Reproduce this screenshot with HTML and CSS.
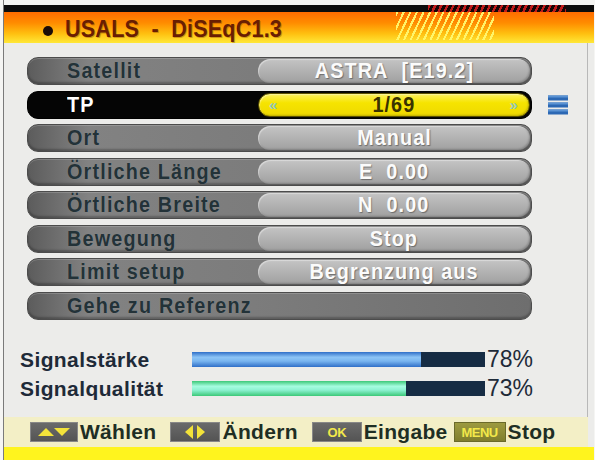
FILE: index.html
```html
<!DOCTYPE html>
<html lang="de">
<head>
<meta charset="utf-8">
<title>USALS - DiSEqC1.3</title>
<link rel="stylesheet" href="styles.css">
</head>
<body>
<div class="screen">
  <div class="topstrip"></div>
  <div class="blackband"><div class="redhatch"></div></div>
  <div class="titlebar">
    <div class="yellowhatch"></div>
    <span class="dot"></span><span class="title">USALS&nbsp; -&nbsp; DiSEqC1.3</span>
  </div>
  <div class="panel">
    <div class="rows">
      <div class="line"><div class="row"><span class="lbl"><span class="t">Satellit</span></span><span class="val"><span class="t">ASTRA&nbsp; [E19.2]</span></span></div></div>
      <div class="line"><div class="row sel"><span class="lbl"><span class="t">TP</span></span><span class="val"><span class="arr">&laquo;</span><span class="t">1/69</span><span class="arr">&raquo;</span></span></div>
        <svg class="menuicon" width="20" height="20" viewBox="0 0 20 20"><rect x="0" y="0.5" width="20" height="5" fill="#2c68b4"/><rect x="0" y="7.5" width="20" height="5" fill="#2c68b4"/><rect x="0" y="14.5" width="20" height="5" fill="#2c68b4"/><rect x="0" y="0.5" width="20" height="2" fill="#5b93d4"/><rect x="0" y="7.5" width="20" height="2" fill="#5b93d4"/><rect x="0" y="14.5" width="20" height="2" fill="#5b93d4"/></svg>
      </div>
      <div class="line"><div class="row"><span class="lbl"><span class="t">Ort</span></span><span class="val"><span class="t">Manual</span></span></div></div>
      <div class="line"><div class="row"><span class="lbl"><span class="t">Örtliche Länge</span></span><span class="val"><span class="t">E&nbsp; 0.00</span></span></div></div>
      <div class="line"><div class="row"><span class="lbl"><span class="t">Örtliche Breite</span></span><span class="val"><span class="t">N&nbsp; 0.00</span></span></div></div>
      <div class="line"><div class="row"><span class="lbl"><span class="t">Bewegung</span></span><span class="val"><span class="t">Stop</span></span></div></div>
      <div class="line"><div class="row"><span class="lbl"><span class="t">Limit setup</span></span><span class="val"><span class="t">Begrenzung aus</span></span></div></div>
      <div class="line"><div class="row"><span class="lbl wide"><span class="t">Gehe zu Referenz</span></span></div></div>
    </div>
    <div class="signals">
      <div class="sig"><span class="slbl">Signalstärke</span><div class="bar"><div class="fill blue" style="width:78%"></div></div><span class="pct">78%</span></div>
      <div class="sig"><span class="slbl">Signalqualität</span><div class="bar"><div class="fill green" style="width:73%"></div></div><span class="pct">73%</span></div>
    </div>
  </div>
  <div class="footer">
    <span class="key"><svg width="34" height="10" viewBox="0 0 34 10"><polygon points="1,9 9,1 17,9" fill="#f2e23a"/><polygon points="17,1 33,1 25,9" fill="#f2e23a"/></svg></span><span class="ftxt">Wählen</span>
    <span class="key k2"><svg width="26" height="14" viewBox="0 0 26 14"><polygon points="11,0 11,14 3,7" fill="#f2e23a"/><polygon points="15,0 15,14 23,7" fill="#f2e23a"/></svg></span><span class="ftxt">Ändern</span>
    <span class="key k3"><span class="ktxt">OK</span></span><span class="ftxt">Eingabe</span>
    <span class="key menu"><span class="ktxt">MENU</span></span><span class="ftxt">Stop</span>
  </div>
  <div class="bottomband"></div>
</div>
</body>
</html>
```
FILE: styles.css
```css
html, body { margin: 0; padding: 0; }
body {
  width: 595px; height: 460px; overflow: hidden;
  background: #f5f5f3;
  font-family: "Liberation Sans", Arial, sans-serif;
}
.screen {
  width: 591px; height: 460px; margin-left: 3px;
  display: flex; flex-direction: column;
  background: #ececea;
  border-left: 1px solid #7a7a7a;
  box-sizing: border-box;
}
.topstrip { height: 5px; background: #f4f4f2; }
.blackband { height: 7px; background: #0c0c0c; position: relative; }
.redhatch {
  position: absolute; left: 424px; top: 0; width: 138px; height: 7px;
  background: repeating-linear-gradient(115deg, #c01a1a 0 2.5px, #160606 2.5px 5.5px);
}
.titlebar {
  height: 31px; position: relative;
  background: linear-gradient(#ff6c00, #ff8c00 35%, #ffc010 70%, #ffe838);
  display: flex; align-items: center; padding-left: 39px;
}
.yellowhatch {
  position: absolute; left: 392px; top: 0; width: 98px; height: 28px;
  background: repeating-linear-gradient(115deg, rgba(255,248,110,0.95) 0 2px, rgba(255,255,255,0) 2px 6px);
}
.dot { width: 10px; height: 10px; border-radius: 50%; background: #1a0c08; margin-top: 7px; flex: none; }
.title {
  display: inline-block; transform: scaleX(0.9); transform-origin: left center;
  margin-left: 12px; margin-top: 3px;
  font-weight: bold; font-size: 24px; color: #6a1e02; letter-spacing: 0.2px;
  text-shadow: 1px 1px 0 rgba(120,60,0,0.35);
  white-space: nowrap;
}
.panel {
  flex: 1; display: flex; flex-direction: column;
  border-right: 1px solid #b8b8b8; margin-right: 6px;
  background: #ececea;
}
.rows { padding-top: 14px; padding-left: 23px; display: flex; flex-direction: column; gap: 5.5px; }
.line { display: flex; align-items: center; }
.row {
  width: 505px; height: 28px; box-sizing: border-box;
  border-radius: 11px; border: 1px solid #4c4c4c;
  background: linear-gradient(90deg, #5c5c5c, #828282 12%, #7c7c7c 45%, #6e6e6e);
  display: flex; align-items: center;
  box-shadow: inset 0 1px 0 rgba(255,255,255,0.18), inset 0 -2px 2px rgba(0,0,0,0.25);
}
.t { display: inline-block; transform: scaleX(0.9); white-space: nowrap; }
.lbl {
  width: 230px; flex: none; padding-left: 39px; box-sizing: border-box;
  font-weight: bold; font-size: 22px; color: #233238; letter-spacing: 1.3px;
  text-shadow: 0 0 1px rgba(200,220,220,0.3);
  line-height: 26px;
}
.lbl .t { transform-origin: left center; }
.lbl.wide { width: auto; }
.val {
  flex: 1; height: 24px; margin-right: 1px; border-radius: 12px;
  background: linear-gradient(#c4c4c4, #b2b2b2 50%, #a0a0a0);
  box-shadow: inset 1px 1px 1px rgba(255,255,255,0.4), inset -1px -1px 2px rgba(0,0,0,0.2);
  text-align: center; line-height: 24px;
  font-weight: bold; font-size: 22px; color: #fbfbfb; letter-spacing: 1.2px;
  text-shadow: 1px 1px 1px rgba(70,70,70,0.6);
}
.row.sel { background: #050505; border-color: #000; box-shadow: none; }
.row.sel .lbl { color: #ffffff; text-shadow: none; }
.row.sel .val {
  background: linear-gradient(#fbf060, #f6e400 40%, #eed800);
  border: 1px solid #5a5000; box-sizing: border-box;
  display: flex; align-items: center; justify-content: space-between; padding: 0 10px;
  color: #3a3200; text-shadow: none;
}
.arr { font-size: 15px; color: #8fc7c0; font-weight: bold; }
.menuicon { margin-left: 16px; }
.signals { padding-top: 32px; padding-left: 16px; display: flex; flex-direction: column; gap: 13px; }
.sig { display: flex; align-items: center; height: 16px; }
.slbl {
  width: 172px; flex: none; font-size: 21px; font-weight: bold; color: #1e2a38;
  letter-spacing: 0.4px;
}
.bar { width: 293px; height: 15px; background: #162c44; }
.fill { height: 100%; }
.fill.blue { background: linear-gradient(#2f6fc8, #8cc4f6 35%, #7ab6f0 60%, #2f6fc8); }
.fill.green { background: linear-gradient(#3cc878, #a6fce0 35%, #8ef2d2 60%, #3cc878); }
.pct { font-size: 23px; color: #1e2a38; margin-left: 2px; }
.footer {
  height: 30px; background: #f3efc6; margin-right: 6px;
  display: flex; align-items: center; padding-left: 26px;
}
.key {
  width: 48px; height: 20px; box-sizing: border-box; flex: none;
  background: linear-gradient(#6a6a6a, #545454);
  border: 1px solid #888; display: flex; align-items: center; justify-content: center;
}
.key.k2 { width: 50px; margin-left: 14px; }
.key.k3 { width: 50px; margin-left: 14px; }
.key.menu { width: 52px; margin-left: 6px; background: linear-gradient(#9c9a40, #807e2c); border-color: #6a6a2a; }
.ktxt { font-size: 13px; font-weight: bold; color: #f2e84a; letter-spacing: -0.5px; }
.ftxt { font-size: 21px; font-weight: bold; color: #1e2e24; margin-left: 2px; letter-spacing: 0.3px; }
.bottomband { height: 13px; background: #fff41e; }
```
